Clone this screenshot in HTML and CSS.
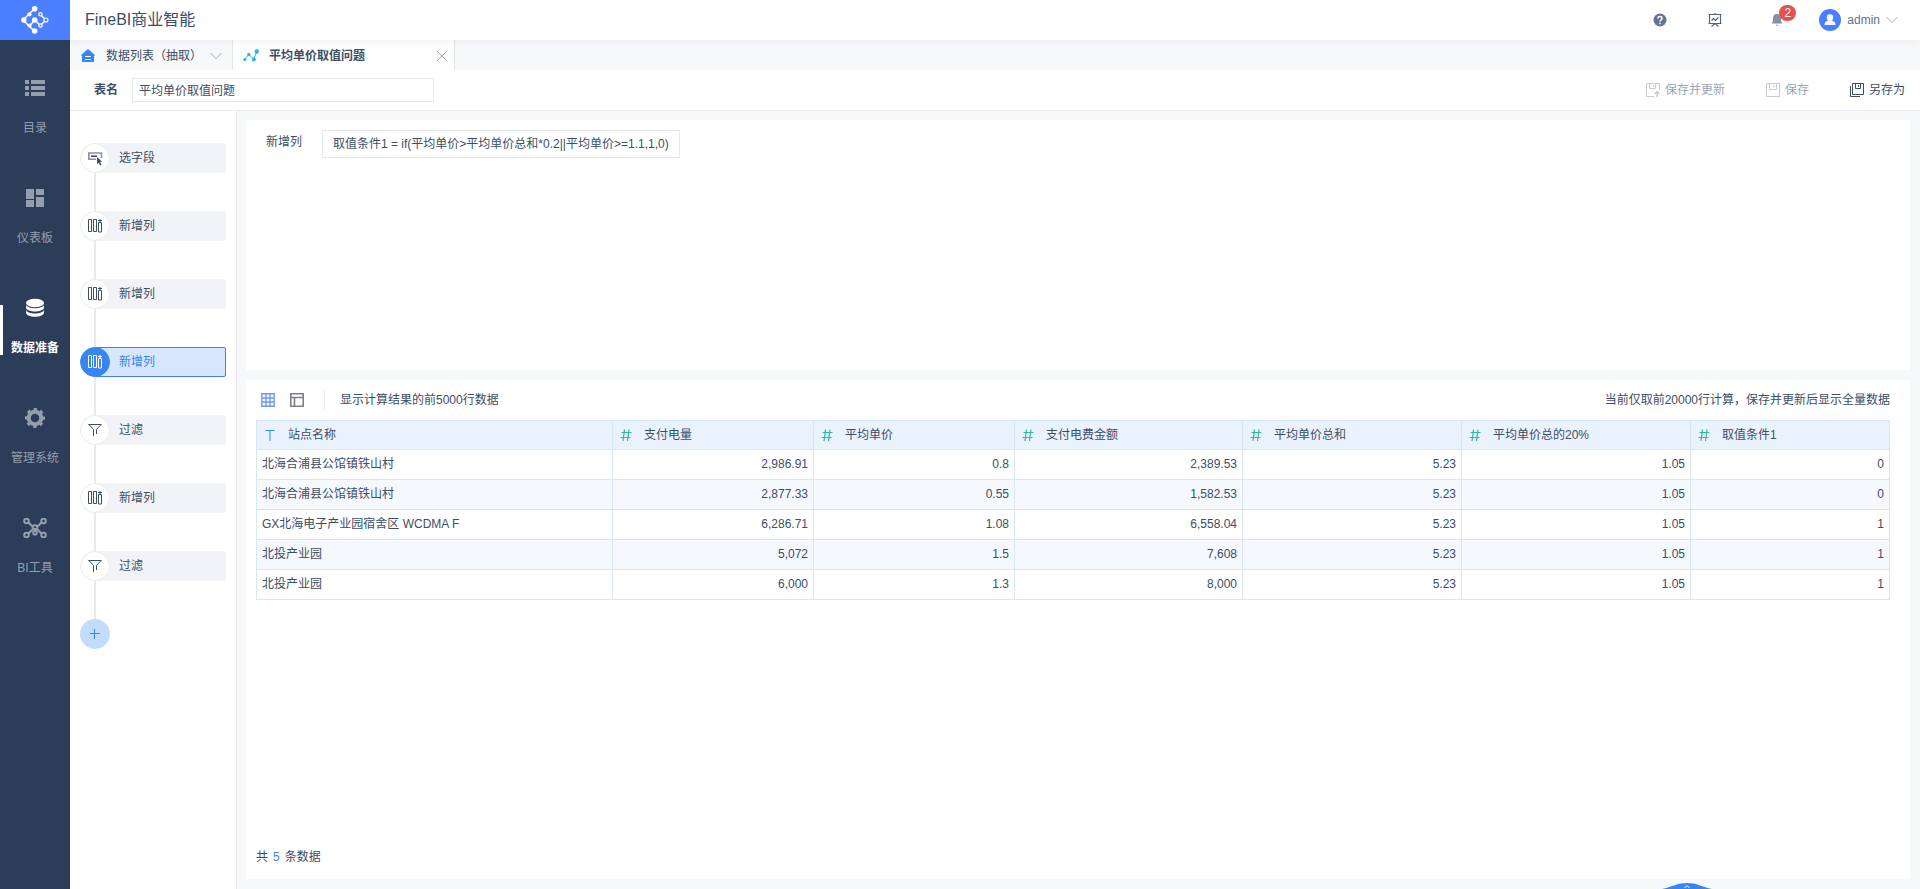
FILE: index.html
```html
<!DOCTYPE html>
<html lang="zh-CN">
<head>
    <meta charset="UTF-8">
    <meta name="viewport" content="width=device-width, initial-scale=1.0">
    <title>FineBI商业智能</title>
    <link rel="stylesheet" href="styles.css">
</head>
<body>
    <!-- 图标库 -->
    <svg class="sprite" aria-hidden="true">
        <symbol id="i-columns" viewBox="0 0 16 16">
            <path d="M1.500 1.500h3v12h-3zM6.500 1.500h3v12h-3zM11.500 4.500h3v9.500h-3zM11 2.500h4M13 1v3" fill="none" stroke="currentColor"/>
        </symbol>
        <symbol id="i-filter" viewBox="0 0 16 16">
            <path d="M1.500 2.500h13M2 2.500l4.500 5v6.500M14 2.500l-4.500 5v4.500" fill="none" stroke="currentColor"/>
        </symbol>
        <symbol id="i-field" viewBox="0 0 16 16">
            <path d="M9 9.200H1.800V3h12.700v5" fill="none" stroke="#8f9299" stroke-width="1.600"/>
            <path d="M4 6.200h6" stroke="#3d4d66" stroke-width="1.600"/>
            <path d="M10 7l5 4.800-2 .2 1.500 2.700-1.300.7-1.500-2.700L10 14z" fill="#3d4d66"/>
        </symbol>
        <symbol id="i-down" viewBox="0 0 12 12">
            <path d="M.5 3l5.500 5.500L11.500 3" fill="none" stroke="currentColor"/>
        </symbol>
        <symbol id="i-number" viewBox="0 0 12 12">
            <path d="M1.500 3.500h10M.5 8.500h10M4.500.5L3 12M9 .5L7.500 12" fill="none" stroke="currentColor" stroke-width="1.200"/>
        </symbol>
        <symbol id="i-text" viewBox="0 0 12 12">
            <path d="M1.500 1.500h9M6 1.500V12" fill="none" stroke="currentColor"/>
        </symbol>
    </svg>

    <header class="header">
        <a class="logo" href="#" aria-label="FineBI">
            <svg width="28" height="28" viewBox="0 0 28 28">
                <path d="M13.700 2.500L2 14l11.700 11.500M9 19.500l4.700-5.500 5.600 5.500L25 14l-5.700-5.500" fill="none" stroke="#fff" stroke-width="1.500"/>
                <g fill="#fff">
                    <circle cx="13.700" cy="2.800" r="2.800"/>
                    <circle cx="2.800" cy="14" r="2.700"/>
                    <circle cx="13.700" cy="25" r="2.800"/>
                    <circle cx="13.700" cy="14" r="2.800"/>
                    <circle cx="8.500" cy="8.300" r="2.100"/>
                    <circle cx="8.500" cy="19.500" r="2.100"/>
                </g>
                <g fill="#4b7fff" stroke="#fff" stroke-width="1.200">
                    <circle cx="25" cy="14" r="2"/>
                    <circle cx="19.500" cy="8.300" r="1.700"/>
                    <circle cx="19.500" cy="19.500" r="1.700"/>
                </g>
            </svg>
        </a>
        <h1 class="title">FineBI商业智能</h1>
        <div class="header-tools">
            <button class="tool-btn" aria-label="帮助">
                <svg width="14" height="14" viewBox="0 0 14 14">
                    <circle cx="7" cy="7" r="6.500" fill="#66758f"/>
                    <path d="M5 5.500c0-2.600 4-2.600 4 0C9 7 7 7 7 8.500M7 9.700v1.500" fill="none" stroke="#fff" stroke-width="1.500"/>
                </svg>
            </button>
            <button class="tool-btn" aria-label="演示">
                <svg width="14" height="14" viewBox="0 0 14 14">
                    <path d="M.5 1.500h13M1.500 1.500v9M12.500 1.500v9M.5 10.500h13M7 0v1.500M3.500 7.500l2-2 2 2 3-3M7 10.500L3.500 13.500M7 10.500l3.500 3" fill="none" stroke="#56637c" stroke-width="1.200"/>
                </svg>
            </button>
            <button class="tool-btn bell" aria-label="消息">
                <svg width="12" height="14" viewBox="0 0 12 14">
                    <path d="M6 1c3 0 4 2 4 4.500 0 3 .5 4 1.500 5H.5c1-1 1.500-2 1.500-5C2 3 3 1 6 1zM4.500 11.700h3L6 13z" fill="#868f9f"/>
                </svg>
                <span class="badge">2</span>
            </button>
            <button class="user">
                <svg width="22" height="22" viewBox="0 0 22 22">
                    <circle cx="11" cy="11" r="11" fill="#4b7fff"/>
                    <circle cx="11" cy="8.500" r="3.200" fill="#fff"/>
                    <path d="M5.500 16c0-3 2-4 4-4.500V10h3v1.500c2 .5 4 1.500 4 4.500z" fill="#fff"/>
                </svg>
                <span>admin</span>
                <svg class="arrow" width="12" height="12"><use href="#i-down"/></svg>
            </button>
        </div>
    </header>

    <div class="layout">
        <nav class="sidebar">
            <a class="nav-item" href="#">
                <svg width="20" height="20" viewBox="0 0 20 20" fill="currentColor">
                    <path d="M0 2h4v4H0zM6 2h14v4H6zM0 8h4v4H0zM6 8h14v4H6zM0 14h4v4H0zM6 14h14v4H6z"/>
                </svg>
                <span>目录</span>
            </a>
            <a class="nav-item" href="#">
                <svg width="20" height="20" viewBox="0 0 20 20" fill="currentColor">
                    <path d="M1 1h8v10H1zM11 1h8v6h-8zM1 12h8v7H1zM11 9h8v10h-8z"/>
                </svg>
                <span>仪表板</span>
            </a>
            <a class="nav-item active" href="#">
                <svg width="20" height="20" viewBox="0 0 20 20" fill="currentColor">
                    <ellipse cx="10" cy="5" rx="9" ry="4.200"/>
                    <path d="M1 6.500c1 5 17 5 18 0v3.200c-1 5-17 5-18 0zM1 11.800c1 5 17 5 18 0v3c-1 5.400-17 5.400-18 0z"/>
                </svg>
                <span>数据准备</span>
            </a>
            <a class="nav-item" href="#">
                <svg width="20" height="20" viewBox="0 0 20 20">
                    <circle cx="10" cy="10" r="6.300" fill="none" stroke="currentColor" stroke-width="4"/>
                    <circle cx="10" cy="10" r="8.800" fill="none" stroke="currentColor" stroke-width="2.400" stroke-dasharray="3.456" stroke-dashoffset="1.728"/>
                </svg>
                <span>管理系统</span>
            </a>
            <a class="nav-item" href="#">
                <svg width="24" height="20" viewBox="0 0 24 20" fill="none" stroke="currentColor" stroke-width="2">
                    <path d="M5 4l5 5M19 4l-5 5M5 16l5-5M19 16l-5-5M12 10v4"/>
                    <circle cx="3.500" cy="3" r="2.300"/>
                    <circle cx="20.500" cy="3" r="2.300"/>
                    <circle cx="3.500" cy="17" r="2.300"/>
                    <circle cx="20.500" cy="17" r="2.300"/>
                    <circle cx="12" cy="9.500" r="2.300"/>
                    <circle cx="12" cy="14.800" r="1.800"/>
                </svg>
                <span>BI工具</span>
            </a>
        </nav>

        <main class="main">
            <div class="tabs">
                <button class="tab tab-list">
                    <svg width="16" height="16" viewBox="0 0 16 16">
                        <path d="M8 1l7.500 6.500H14V14H2V7.500H.5z" fill="#3685f2"/>
                        <path d="M5 8.500h6M5 11.500h6" stroke="#fff" stroke-width="1.200"/>
                    </svg>
                    <span>数据列表（抽取）</span>
                    <svg class="arrow" width="12" height="12"><use href="#i-down"/></svg>
                </button>
                <button class="tab tab-current">
                    <svg width="16" height="16" viewBox="0 0 16 16">
                        <path d="M1.800 11.500l4-5 5 5 3-8" fill="none" stroke="#25b7ef"/>
                        <g fill="#25b7ef">
                            <circle cx="1.800" cy="11.500" r="1.600"/>
                            <circle cx="5.800" cy="6.500" r="1.700"/>
                            <circle cx="10.800" cy="11.500" r="2"/>
                            <circle cx="13.800" cy="3.500" r="2.200"/>
                        </g>
                    </svg>
                    <span>平均单价取值问题</span>
                    <svg class="close" width="12" height="12" viewBox="0 0 12 12">
                        <path d="M1 1l10 10M11 1L1 11" stroke="currentColor"/>
                    </svg>
                </button>
            </div>

            <div class="toolbar">
                <label for="tableName">表名</label>
                <input type="text" id="tableName" value="平均单价取值问题">
                <div class="actions">
                    <button disabled>
                        <svg width="14" height="14" viewBox="0 0 14 14" fill="none" stroke="currentColor">
                            <path d="M8 13.500H.5V.5h13V7M3.500.5v5h6v-5M7.500 2v2"/>
                            <path d="M11 14V9M8.500 11L11 8.500l2.500 2.500" stroke-width="1.500"/>
                        </svg>
                        <span>保存并更新</span>
                    </button>
                    <button disabled>
                        <svg width="14" height="14" viewBox="0 0 14 14" fill="none" stroke="currentColor">
                            <path d="M.5.5h13v13H.5zM3.500.5v6h7v-6M8 2v2.500"/>
                        </svg>
                        <span>保存</span>
                    </button>
                    <button>
                        <svg width="14" height="14" viewBox="0 0 14 14" fill="none" stroke="currentColor">
                            <path d="M2.500.5h11v11h-11zM5.500.5v5h5v-5M8.500 2v2M.5 3v10.500H10"/>
                        </svg>
                        <span>另存为</span>
                    </button>
                </div>
            </div>

            <div class="workspace">
                <aside class="steps">
                    <button class="step">
                        <span class="step-icon"><svg width="16" height="16"><use href="#i-field"/></svg></span>
                        <span class="step-name">选字段</span>
                    </button>
                    <button class="step">
                        <span class="step-icon"><svg width="16" height="16"><use href="#i-columns"/></svg></span>
                        <span class="step-name">新增列</span>
                    </button>
                    <button class="step">
                        <span class="step-icon"><svg width="16" height="16"><use href="#i-columns"/></svg></span>
                        <span class="step-name">新增列</span>
                    </button>
                    <button class="step active">
                        <span class="step-icon"><svg width="16" height="16"><use href="#i-columns"/></svg></span>
                        <span class="step-name">新增列</span>
                    </button>
                    <button class="step">
                        <span class="step-icon"><svg width="16" height="16"><use href="#i-filter"/></svg></span>
                        <span class="step-name">过滤</span>
                    </button>
                    <button class="step">
                        <span class="step-icon"><svg width="16" height="16"><use href="#i-columns"/></svg></span>
                        <span class="step-name">新增列</span>
                    </button>
                    <button class="step">
                        <span class="step-icon"><svg width="16" height="16"><use href="#i-filter"/></svg></span>
                        <span class="step-name">过滤</span>
                    </button>
                    <button class="add-step" aria-label="添加步骤">
                        <svg width="10" height="10" viewBox="0 0 10 10"><path d="M0 4.500h10M4.500 0v10" stroke="currentColor"/></svg>
                    </button>
                </aside>

                <div class="content">
                    <section class="card formula-card">
                        <span class="formula-label">新增列</span>
                        <button class="formula">取值条件1 = if(平均单价&gt;平均单价总和*0.2||平均单价&gt;=1.1,1,0)</button>
                    </section>

                    <section class="card data-card">
                        <div class="data-bar">
                            <button class="view-btn view-active" aria-label="数据预览">
                                <svg width="14" height="14" viewBox="0 0 14 14" fill="none" stroke="currentColor">
                                    <path d="M.8.8h12.400v12.400H.8zM.5 5h13M.5 9h13M5 .5v13M9 .5v13" stroke-width="1.400"/>
                                </svg>
                            </button>
                            <button class="view-btn" aria-label="字段视图">
                                <svg width="14" height="14" viewBox="0 0 14 14" fill="none" stroke="currentColor">
                                    <path d="M.8.8h12.400v12.400H.8zM.8 4.500h12.400M4.500 4.500v8.700" stroke-width="1.600"/>
                                </svg>
                            </button>
                            <span class="data-tip">显示计算结果的前5000行数据</span>
                            <span class="data-note">当前仅取前20000行计算，保存并更新后显示全量数据</span>
                        </div>
                        <table class="data-table">
                            <colgroup>
                                <col class="col-name">
                                <col class="col-power">
                                <col class="col-price">
                                <col class="col-money">
                                <col class="col-total">
                                <col class="col-percent">
                                <col>
                            </colgroup>
                            <thead>
                                <tr>
                                    <th><svg class="type-text" width="12" height="12"><use href="#i-text"/></svg>站点名称</th>
                                    <th><svg width="12" height="12"><use href="#i-number"/></svg>支付电量</th>
                                    <th><svg width="12" height="12"><use href="#i-number"/></svg>平均单价</th>
                                    <th><svg width="12" height="12"><use href="#i-number"/></svg>支付电费金额</th>
                                    <th><svg width="12" height="12"><use href="#i-number"/></svg>平均单价总和</th>
                                    <th><svg width="12" height="12"><use href="#i-number"/></svg>平均单价总的20%</th>
                                    <th><svg width="12" height="12"><use href="#i-number"/></svg>取值条件1</th>
                                </tr>
                            </thead>
                            <tbody>
                                <tr><td>北海合浦县公馆镇铁山村</td><td>2,986.91</td><td>0.8</td><td>2,389.53</td><td>5.23</td><td>1.05</td><td>0</td></tr>
                                <tr><td>北海合浦县公馆镇铁山村</td><td>2,877.33</td><td>0.55</td><td>1,582.53</td><td>5.23</td><td>1.05</td><td>0</td></tr>
                                <tr><td>GX北海电子产业园宿舍区 WCDMA F</td><td>6,286.71</td><td>1.08</td><td>6,558.04</td><td>5.23</td><td>1.05</td><td>1</td></tr>
                                <tr><td>北投产业园</td><td>5,072</td><td>1.5</td><td>7,608</td><td>5.23</td><td>1.05</td><td>1</td></tr>
                                <tr><td>北投产业园</td><td>6,000</td><td>1.3</td><td>8,000</td><td>5.23</td><td>1.05</td><td>1</td></tr>
                            </tbody>
                        </table>
                        <div class="data-footer">
                            <span>共</span>
                            <span class="count">5</span>
                            <span>条数据</span>
                        </div>
                    </section>
                </div>
            </div>
        </main>
    </div>

    <!-- 底部展开按钮 -->
    <button class="drawer" aria-label="展开">
        <svg width="50" height="6" viewBox="0 0 50 6">
            <path d="M0 6C13 3 15 0 25 0s12 3 25 6z" fill="#3685f2"/>
            <path d="M22.500 5L25 2.500 27.500 5" fill="none" stroke="#fff"/>
        </svg>
    </button>
</body>
</html>
```

FILE: styles.css
```css
* {
    box-sizing: border-box;
}
body {
    margin: 0;
    min-height: 100vh;
    display: flex;
    flex-direction: column;
    font-family: "Liberation Sans", "Noto Sans CJK SC", sans-serif;
    font-size: 12px;
    line-height: 16px;
    color: #3d4d66;
    background-color: #f7f8fa;
}
button, input {
    font: inherit;
    color: inherit;
}
button {
    padding: 0;
    border: none;
    background: none;
    cursor: pointer;
}
svg {
    display: block;
    flex: none;
}
.sprite {
    position: absolute;
    width: 0;
    height: 0;
}
.arrow, .close {
    color: #a5acb8;
}

/* 顶部 */
.header {
    position: relative;
    z-index: 1;
    display: flex;
    align-items: center;
    height: 40px;
    background-color: #fff;
    box-shadow: 0 0 10px rgba(61,77,102,0.1);
}
.logo {
    display: flex;
    align-items: center;
    justify-content: center;
    width: 70px;
    height: 40px;
    background-color: #4b7fff;
}
.title {
    margin: 0 0 0 15px;
    font-size: 16px;
    line-height: 24px;
    font-weight: normal;
}
.header-tools {
    display: flex;
    align-items: center;
    margin-left: auto;
    padding-right: 22px;
}
.tool-btn {
    display: flex;
    justify-content: center;
    width: 24px;
    margin-right: 31px;
}
.bell {
    position: relative;
    margin-left: 7px;
    margin-right: 30px;
}
.badge {
    position: absolute;
    left: 14px;
    top: -8px;
    width: 17px;
    height: 16px;
    border-radius: 8px;
    background-color: #e85050;
    color: #fff;
    text-align: center;
}
.user {
    display: flex;
    align-items: center;
    gap: 6px;
    color: #64718a;
}

/* 左侧导航 */
.layout {
    flex: 1;
    display: flex;
}
.sidebar {
    position: relative;
    z-index: 2;
    width: 70px;
    padding-top: 15px;
    background-color: #2c3d5a;
}
.nav-item {
    display: flex;
    flex-direction: column;
    align-items: center;
    gap: 22px;
    height: 110px;
    padding-top: 23px;
    color: #959eac;
    text-decoration: none;
}
.nav-item.active {
    color: #fff;
    font-weight: bold;
    background: linear-gradient(#fff, #fff) left center / 3px 50px no-repeat;
}

/* 标签页 */
.main {
    flex: 1;
    min-width: 0;
    display: flex;
    flex-direction: column;
}
.tabs {
    display: flex;
    height: 30px;
}
.tab {
    display: flex;
    align-items: center;
    gap: 10px;
    padding: 1px 10px 0;
    border-right: 1px solid #e3e5ea;
}
.tab-list {
    width: 163px;
}
.tab-current {
    width: 222px;
    background-color: #fff;
    font-weight: bold;
}
.tab .arrow {
    margin-left: auto;
}
.tab .close {
    margin-left: auto;
    margin-right: -4px;
}

/* 工具栏 */
.toolbar {
    display: flex;
    align-items: center;
    height: 41px;
    padding: 0 15px 0 24px;
    border-bottom: 1px solid #e6e8ec;
    background-color: #fff;
}
.toolbar label {
    font-weight: bold;
}
.toolbar input {
    width: 302px;
    height: 24px;
    margin-left: 14px;
    padding: 0 6px 2px;
    border: 1px solid #e6e8ec;
    background-color: #fff;
}
.actions {
    display: flex;
    gap: 41px;
    margin-left: auto;
}
.actions button {
    display: flex;
    align-items: center;
    gap: 5px;
}
.actions button:disabled {
    color: #9da5b2;
    cursor: default;
}
.actions button:disabled svg {
    color: #c8cdd4;
}

/* 步骤 */
.workspace {
    flex: 1;
    display: flex;
}
.steps {
    display: flex;
    flex-direction: column;
    width: 167px;
    padding: 32px 10px;
    border-right: 1px solid #e6e8ec;
    background-color: #fff;
}
.step {
    position: relative;
    display: flex;
    width: 146px;
    height: 30px;
    margin-bottom: 38px;
    text-align: left;
}
.step::after {
    content: "";
    position: absolute;
    left: 14px;
    top: 30px;
    width: 2px;
    height: 38px;
    background-color: #e6e9ed;
}
.step-icon {
    z-index: 1;
    display: flex;
    align-items: center;
    justify-content: center;
    width: 30px;
    height: 30px;
    border: 1px solid #e8eaed;
    border-radius: 50%;
    background-color: #fff;
}
.step-name {
    flex: 1;
    height: 30px;
    margin-left: -15px;
    padding-left: 23px;
    border: 1px solid #f2f3f7;
    border-radius: 2px;
    line-height: 28px;
    background-color: #f2f3f7;
}
.step.active .step-icon {
    border-color: #3685f2;
    background-color: #3685f2;
    color: #fff;
}
.step.active .step-name {
    border-color: #3685f2;
    background-color: #d7e6fd;
    color: #3685f2;
}
.add-step {
    display: flex;
    align-items: center;
    justify-content: center;
    width: 30px;
    height: 30px;
    border-radius: 50%;
    background-color: #c3dbfc;
    color: #3685f2;
}

/* 内容区 */
.content {
    flex: 1;
    min-width: 0;
    display: flex;
    flex-direction: column;
    gap: 10px;
    padding: 9px 10px 10px 9px;
}
.card {
    background-color: #fff;
}
.formula-card {
    display: flex;
    align-items: flex-start;
    min-height: 250px;
    padding: 10px 20px;
}
.formula-label {
    width: 56px;
    line-height: 24px;
}
.formula {
    height: 28px;
    padding: 0 10px;
    border: 1px solid #e6e8ec;
}
.data-card {
    flex: 1;
    display: flex;
    flex-direction: column;
    padding: 0 20px 0 10px;
}
.data-bar {
    display: flex;
    align-items: center;
    height: 40px;
    padding-left: 5px;
}
.view-btn {
    margin-right: 15px;
    color: #7f8087;
}
.view-active {
    color: #6f96fa;
}
.data-tip {
    margin-left: 5px;
    padding-left: 15px;
    border-left: 1px solid #eceef3;
    line-height: 20px;
}
.data-note {
    margin-left: auto;
}

/* 数据表格 */
.data-table {
    width: 100%;
    table-layout: fixed;
    border-collapse: collapse;
}
.col-name { width: 356px; }
.col-power, .col-price { width: 201px; }
.col-money { width: 228px; }
.col-total { width: 219px; }
.col-percent { width: 229px; }
th, td {
    height: 30px;
    padding: 0 5px 2px;
    border: 1px solid #d8e6fa;
    text-align: right;
    white-space: nowrap;
}
th {
    height: 29px;
    padding: 0 5px 0 7px;
    background-color: #eaf2fe;
    text-align: left;
    font-weight: normal;
}
th svg {
    display: inline-block;
    margin-right: 12px;
    vertical-align: -2px;
    color: #32b8a4;
}
th .type-text {
    color: #3685f2;
}
td:first-child {
    text-align: left;
}
tbody tr:nth-child(even) {
    background-color: #f5f9fe;
}
.data-footer {
    display: flex;
    gap: 5px;
    margin-top: auto;
    padding: 14px 0;
}
.count {
    color: #3685f2;
}

.drawer {
    position: fixed;
    right: 208px;
    bottom: 0;
}
```
